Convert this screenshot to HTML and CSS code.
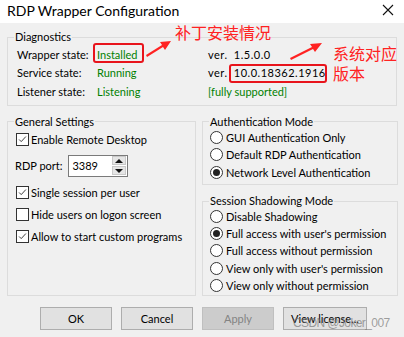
FILE: index.html
```html
<!DOCTYPE html>
<html lang="en">
<head>
  <meta charset="UTF-8">
  <title>RDP Wrapper Configuration</title>
  <link rel="stylesheet" href="styles.css">
</head>
<body>
  <div class="window">
    <div class="titlebar">
      <span class="title">RDP Wrapper Configuration</span>
      <svg class="close" width="12" height="12" viewBox="0 0 12 12">
        <path d="M1 1 L11 11 M11 1 L1 11" stroke="#111" stroke-width="1.1" fill="none"/>
      </svg>
    </div>

    <div class="dialog">
      <fieldset class="group diag">
        <legend>Diagnostics</legend>
        <div class="diag-grid">
          <span>Wrapper state:</span>
          <span class="green">Installed</span>
          <span class="ver">ver. 1.5.0.0</span>

          <span>Service state:</span>
          <span class="green">Running</span>
          <span class="ver">ver. 10.0.18362.1916</span>

          <span>Listener state:</span>
          <span class="green">Listening</span>
          <span class="green">[fully supported]</span>
        </div>
      </fieldset>

      <div class="columns">
        <fieldset class="group general">
          <legend>General Settings</legend>
          <div class="rows">
            <label class="check-row"><span class="box checked"><svg viewBox="0 0 13 13"><polyline points="2.5,6.5 5,9 10.5,3" /></svg></span>Enable Remote Desktop</label>
            <div class="port-row">
              <span>RDP port:</span>
              <div class="spin">
                <span class="spin-value">3389</span>
                <div class="spin-btns">
                  <span class="arrow up"></span>
                  <span class="arrow down"></span>
                </div>
              </div>
            </div>
            <label class="check-row"><span class="box checked"><svg viewBox="0 0 13 13"><polyline points="2.5,6.5 5,9 10.5,3" /></svg></span>Single session per user</label>
            <label class="check-row"><span class="box"></span>Hide users on logon screen</label>
            <label class="check-row"><span class="box checked"><svg viewBox="0 0 13 13"><polyline points="2.5,6.5 5,9 10.5,3" /></svg></span>Allow to start custom programs</label>
          </div>
        </fieldset>

        <div class="right-col">
          <fieldset class="group auth">
            <legend>Authentication Mode</legend>
            <div class="radio-list">
              <label class="radio-row"><span class="dot"></span>GUI Authentication Only</label>
              <label class="radio-row"><span class="dot"></span>Default RDP Authentication</label>
              <label class="radio-row"><span class="dot on"></span>Network Level Authentication</label>
            </div>
          </fieldset>

          <fieldset class="group shadow">
            <legend>Session Shadowing Mode</legend>
            <div class="radio-list tight">
              <label class="radio-row"><span class="dot"></span>Disable Shadowing</label>
              <label class="radio-row"><span class="dot on"></span>Full access with user's permission</label>
              <label class="radio-row"><span class="dot"></span>Full access without permission</label>
              <label class="radio-row"><span class="dot"></span>View only with user's permission</label>
              <label class="radio-row"><span class="dot"></span>View only without permission</label>
            </div>
          </fieldset>
        </div>
      </div>

      <div class="buttons">
        <button class="btn">OK</button>
        <button class="btn">Cancel</button>
        <button class="btn" disabled>Apply</button>
        <button class="btn wide">View license...</button>
      </div>
    </div>

    <!-- screenshot annotations -->
    <div class="mark mark-installed"></div>
    <div class="mark mark-version"></div>
    <div class="note note-patch">补丁安装情况</div>
    <div class="note note-system">系统对应<br>版本</div>
    <svg class="arrows" width="404" height="337" viewBox="0 0 404 337">
      <polygon points="146,55 147,57 163,47 165,50 171,41 160,42 162,45" fill="#f22"/>
      <polygon points="290,58 291,60 313,49 315,52 322,43 310,44 312,47" fill="#f22"/>
    </svg>
    <div class="watermark">CSDN @Joker_007</div>
  </div>
</body>
</html>
```

FILE: styles.css
```css
* {
  margin: 0;
  padding: 0;
  box-sizing: border-box;
}

body {
  font-family: Lato, 'Noto Sans', Arial, sans-serif;
  font-size: 11px;
  color: #000;
  background: #f0f0f0;
}

.window {
  position: relative;
  width: 404px;
  height: 337px;
  background: #f0f0f0;
  overflow: hidden;
}

.titlebar {
  height: 23px;
  background: #fff;
  display: flex;
  align-items: center;
  justify-content: space-between;
  padding: 0 10px 0 7px;
}

.title {
  font-size: 14px;
  margin-top: -2px;
}

.close {
  margin-top: -3px;
}

.dialog {
  padding: 7px 7px 0 7px;
}

/* group boxes */
.group {
  border: 1px solid #dcdcdc;
  padding: 0 6px;
  margin: 0;
  white-space: nowrap;
}

.group legend {
  padding: 0 1px;
  line-height: 14px;
}

.diag-grid {
  display: grid;
  grid-template-columns: 80px 111px 1fr;
  grid-auto-rows: 18.5px;
  align-items: center;
  padding: 1px 0 4px 3px;
}

.green {
  color: #008000;
}

.ver {
  font-variant-numeric: tabular-nums;
  letter-spacing: 0.5px;
  word-spacing: 3px;
}

.columns {
  display: grid;
  grid-template-columns: 189px 196px;
  gap: 6px;
  margin-top: 9px;
}

.rows {
  display: flex;
  flex-direction: column;
  gap: 4px;
  padding: 2px 0 0 2px;
}

.check-row {
  height: 18px;
  display: flex;
  align-items: center;
  gap: 2px;
}

.box {
  width: 13px;
  height: 13px;
  border: 1px solid #333;
  background: #fff;
  flex-shrink: 0;
}

.box svg {
  display: block;
  width: 11px;
  height: 11px;
}

.box polyline {
  fill: none;
  stroke: #333;
  stroke-width: 1.1;
}

.port-row {
  display: flex;
  align-items: center;
  gap: 6px;
  margin: 2px 0 3px -1px;
}

.spin {
  width: 60px;
  height: 22px;
  border: 1px solid #7a7a7a;
  background: #fff;
  display: flex;
  align-items: center;
  justify-content: space-between;
  padding: 0 1px 0 3px;
}

.spin-btns {
  display: flex;
  flex-direction: column;
  gap: 1px;
}

.arrow {
  width: 14px;
  height: 9px;
  background: #e5e5e5;
  border: 1px solid #c9c9c9;
  display: flex;
  align-items: center;
  justify-content: center;
}

.arrow::after {
  content: '';
  border-left: 4px solid transparent;
  border-right: 4px solid transparent;
}

.arrow.up::after {
  border-bottom: 4px solid #111;
}

.arrow.down::after {
  border-top: 4px solid #111;
}

.right-col {
  display: flex;
  flex-direction: column;
  gap: 9px;
}

.radio-list {
  display: flex;
  flex-direction: column;
  padding: 0 0 3px 1px;
}

.radio-row {
  height: 17.5px;
  display: flex;
  align-items: center;
  gap: 3px;
}

.radio-list.tight {
  padding-bottom: 1px;
}

.radio-list.tight .radio-row {
  height: 17.2px;
}

.dot {
  width: 13px;
  height: 13px;
  border: 1px solid #333;
  border-radius: 50%;
  background: #fff;
  display: flex;
  align-items: center;
  justify-content: center;
  flex-shrink: 0;
}

.dot.on::after {
  content: '';
  width: 7px;
  height: 7px;
  border-radius: 50%;
  background: #222;
}

.buttons {
  display: flex;
  gap: 9px;
  margin-top: 11px;
  padding-left: 33px;
}

.btn {
  width: 72px;
  height: 23px;
  font-family: inherit;
  font-size: 11px;
  background: #e1e1e1;
  border: 1px solid #adadad;
  color: #000;
}

.btn:disabled {
  background: #cccccc;
  border-color: #bfbfbf;
  color: #838383;
}

.btn.wide {
  width: 84px;
}

/* annotations drawn over the screenshot */
.mark {
  position: absolute;
  border: 2.5px solid #e8141c;
  border-radius: 3px;
}

.mark-installed {
  left: 93px;
  top: 43px;
  width: 51px;
  height: 20px;
}

.mark-version {
  left: 229px;
  top: 64px;
  width: 98px;
  height: 19px;
}

.note {
  position: absolute;
  font-family: 'Noto Sans CJK SC', sans-serif;
  font-size: 16px;
  line-height: 20px;
  color: #f22;
}

.note-patch {
  left: 175px;
  top: 22px;
}

.note-system {
  left: 333px;
  top: 43px;
}

.arrows {
  position: absolute;
  left: 0;
  top: 0;
}

.watermark {
  position: absolute;
  left: 293px;
  top: 316px;
  white-space: nowrap;
  font-family: Arial, 'Liberation Sans', sans-serif;
  font-size: 12px;
  letter-spacing: -0.6px;
  color: rgba(120, 120, 120, 0.7);
}
```
